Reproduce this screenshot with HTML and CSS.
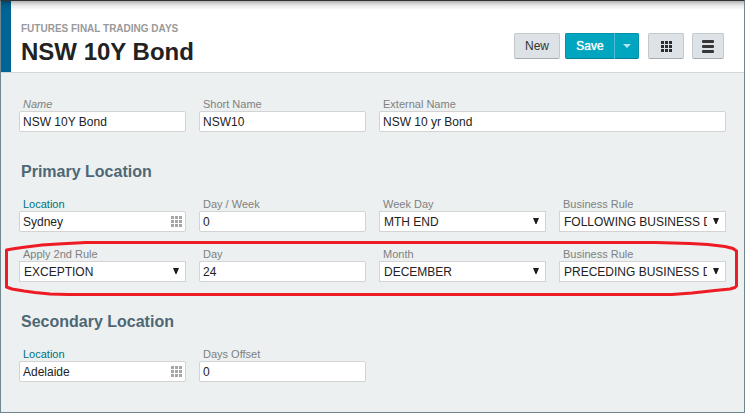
FILE: index.html
```html
<!DOCTYPE html>
<html lang="en">
<head>
<meta charset="utf-8">
<title>NSW 10Y Bond</title>
<link rel="stylesheet" href="styles.css">
</head>
<body>
<header class="header">
  <div class="titles">
    <p class="eyebrow">FUTURES FINAL TRADING DAYS</p>
    <h1 class="title">NSW 10Y Bond</h1>
  </div>
  <div class="actions">
    <button class="btn btn-new" type="button">New</button>
    <div class="split">
      <button class="btn btn-save" type="button">Save</button>
      <button class="btn btn-more" type="button" aria-label="More save options">
        <svg width="8" height="4" viewBox="0 0 8 4"><path d="M0 0h8L4 4z" fill="#b5e6ee"/></svg>
      </button>
    </div>
    <button class="btn btn-grid" type="button" aria-label="Grid view">
      <svg width="11" height="11" viewBox="0 0 11 11" fill="#2b2b2b"><path d="M0 0h3v3H0zM4 0h3v3H4zM8 0h3v3H8zM0 4h3v3H0zM4 4h3v3H4zM8 4h3v3H8zM0 8h3v3H0zM4 8h3v3H4zM8 8h3v3H8z"/></svg>
    </button>
    <button class="btn btn-menu" type="button" aria-label="Menu">
      <svg width="12" height="13" viewBox="0 0 12 13" fill="#363636"><rect width="12" height="3" rx="1"/><rect y="5" width="12" height="3" rx="1"/><rect y="10" width="12" height="3" rx="1"/></svg>
    </button>
  </div>
</header>
<main class="form">
  <div class="row">
    <div class="field"><label class="label required" for="name">Name</label><input class="control" id="name" type="text" value="NSW 10Y Bond"></div>
    <div class="field"><label class="label" for="short">Short Name</label><input class="control" id="short" type="text" value="NSW10"></div>
    <div class="field wide"><label class="label" for="external">External Name</label><input class="control" id="external" type="text" value="NSW 10 yr Bond"></div>
  </div>

  <h2 class="section">Primary Location</h2>
  <div class="row">
    <div class="field"><label class="label link" for="location1">Location</label>
      <div class="box"><input class="control" id="location1" type="text" value="Sydney">
        <svg class="picker" width="11" height="11" viewBox="0 0 11 11" fill="#a6a6a6"><path d="M0 0h3v3H0zM4 0h3v3H4zM8 0h3v3H8zM0 4h3v3H0zM4 4h3v3H4zM8 4h3v3H8zM0 8h3v3H0zM4 8h3v3H4zM8 8h3v3H8z"/></svg></div></div>
    <div class="field"><label class="label" for="dayweek">Day / Week</label><input class="control" id="dayweek" type="text" value="0"></div>
    <div class="field"><label class="label" for="weekday">Week Day</label>
      <div class="box"><select class="control select" id="weekday"><option>MTH END</option></select>
        <svg class="arrow" width="6" height="6" viewBox="0 0 6 6"><path d="M0 0h6L3.5 6h-1z" fill="#1c1c1c"/></svg></div></div>
    <div class="field"><label class="label" for="rule1">Business Rule</label>
      <div class="box"><select class="control select" id="rule1"><option>FOLLOWING BUSINESS DAY</option></select>
        <svg class="arrow" width="6" height="6" viewBox="0 0 6 6"><path d="M0 0h6L3.5 6h-1z" fill="#1c1c1c"/></svg></div></div>
  </div>
  <div class="row marked">
    <div class="field"><label class="label" for="second">Apply 2nd Rule</label>
      <div class="box"><select class="control select" id="second"><option>EXCEPTION</option></select>
        <svg class="arrow" width="6" height="6" viewBox="0 0 6 6"><path d="M0 0h6L3.5 6h-1z" fill="#1c1c1c"/></svg></div></div>
    <div class="field"><label class="label" for="day">Day</label><input class="control" id="day" type="text" value="24"></div>
    <div class="field"><label class="label" for="month">Month</label>
      <div class="box"><select class="control select" id="month"><option>DECEMBER</option></select>
        <svg class="arrow" width="6" height="6" viewBox="0 0 6 6"><path d="M0 0h6L3.5 6h-1z" fill="#1c1c1c"/></svg></div></div>
    <div class="field"><label class="label" for="rule2">Business Rule</label>
      <div class="box"><select class="control select" id="rule2"><option>PRECEDING BUSINESS DAY</option></select>
        <svg class="arrow" width="6" height="6" viewBox="0 0 6 6"><path d="M0 0h6L3.5 6h-1z" fill="#1c1c1c"/></svg></div></div>
    <svg class="mark" viewBox="4 240 735 58" preserveAspectRatio="none"><path d="M86 242.5L58 244L42 245L22 247.5L12 249L6.5 250V287L12 289L24 291L35 292.5L50 294L68 294.5H672L692 293L715 290.5L730 289L735 287.5L736.5 286V251L733 248.5L725 246.5L708 244.5L690 243.5L655 242.5Z" fill="none" stroke="#ed1c24" stroke-width="3" stroke-linejoin="round"/></svg>
  </div>

  <h2 class="section">Secondary Location</h2>
  <div class="row">
    <div class="field"><label class="label link" for="location2">Location</label>
      <div class="box"><input class="control" id="location2" type="text" value="Adelaide">
        <svg class="picker" width="11" height="11" viewBox="0 0 11 11" fill="#a6a6a6"><path d="M0 0h3v3H0zM4 0h3v3H4zM8 0h3v3H8zM0 4h3v3H0zM4 4h3v3H4zM8 4h3v3H8zM0 8h3v3H0zM4 8h3v3H4zM8 8h3v3H8z"/></svg></div></div>
    <div class="field"><label class="label" for="offset">Days Offset</label><input class="control" id="offset" type="text" value="0"></div>
  </div>
</main>
</body>
</html>
```
FILE: styles.css
```css
* {
  box-sizing: border-box;
}

body {
  display: flex;
  flex-direction: column;
  min-height: 100vh;
  margin: 0;
  border: 1px solid #708690;
  border-top-color: #333;
  background: #ecf0f1;
  color: #222;
  font: 12px/16px "Liberation Sans", Arial, sans-serif;
}

svg {
  display: block;
}

.header {
  display: flex;
  align-items: flex-end;
  justify-content: space-between;
  padding: 20px 20px 0;
  border-bottom: 1px solid #d3d6d7;
  background:
    linear-gradient(rgba(0, 0, 0, 0.3), rgba(0, 0, 0, 0.1) 4px, transparent 9px),
    linear-gradient(to right, #006595 10px, #fff 10px);
}

.titles {
  padding-bottom: 5px;
}

.eyebrow {
  margin: 0;
  color: #999;
  font-size: 10px;
  font-weight: bold;
  line-height: 16px;
}

.title {
  margin: 0;
  font-size: 24px;
  line-height: 30px;
}

.actions {
  display: flex;
  padding-bottom: 13px;
}

.btn {
  display: flex;
  align-items: center;
  justify-content: center;
  height: 26px;
  padding: 0;
  border: 1px solid #c3c8ca;
  border-bottom-color: #a5abae;
  border-radius: 2px;
  background: #dce2e6;
  color: #333;
  font: inherit;
}

.btn-new {
  width: 46px;
  margin-right: 5px;
}

.split {
  display: flex;
  margin-right: 9px;
}

.btn-save,
.btn-more {
  border-color: #0092a8;
  border-bottom-color: #007f92;
  background: #00a5bf;
  color: #fff;
}

.btn-save {
  width: 49px;
  border-right: 0;
  border-radius: 2px 0 0 2px;
  text-shadow: 0 0 1px #fff;
}

.btn-more {
  width: 25px;
  border-left-color: #4dbfd0;
  border-radius: 0 2px 2px 0;
}

.btn-grid {
  width: 36px;
  margin-right: 8px;
}

.btn-menu {
  width: 32px;
}

.form {
  padding: 24px 18px;
}

.row {
  display: grid;
  grid-template-columns: repeat(4, minmax(0, 1fr));
  gap: 13px;
}

.row + .row {
  margin-top: 15px;
}

.marked {
  position: relative;
}

.mark {
  position: absolute;
  top: -7px;
  left: -15px;
  width: calc(100% + 28px);
  height: 58px;
  pointer-events: none;
}

.wide {
  grid-column: span 2;
}

.label {
  display: block;
  padding-left: 4px;
  color: #808080;
  font-size: 11px;
  line-height: 14px;
}

.required {
  font-style: italic;
}

.link {
  color: #00707c;
}

.box {
  position: relative;
}

.control {
  display: block;
  width: 100%;
  height: 21px;
  margin: 0;
  padding: 0 3px;
  border: 1px solid #d3d3d3;
  border-radius: 2px;
  background: #fff;
  color: #222;
  font: inherit;
}

.select {
  appearance: none;
  padding: 0 18px 0 4px;
  border-radius: 0;
}

.picker {
  position: absolute;
  top: 5px;
  right: 4px;
}

.arrow {
  position: absolute;
  top: 7px;
  right: 7px;
  pointer-events: none;
}

.section {
  margin: 30px 0 15px 2px;
  color: #4f6775;
  font-size: 16px;
  line-height: 20px;
}
```
